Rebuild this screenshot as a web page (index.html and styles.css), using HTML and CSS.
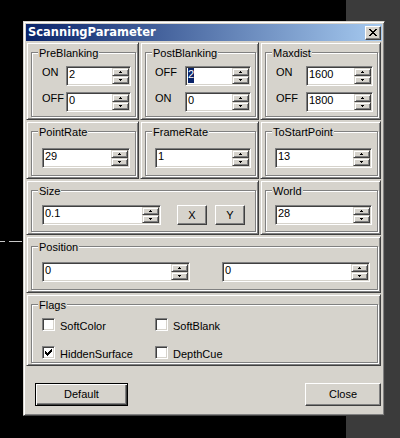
FILE: index.html
```html
<!DOCTYPE html>
<html>
<head>
<meta charset="utf-8">
<title>ScanningParameter</title>
<link rel="stylesheet" href="styles.css">
</head>
<body>
<div class="desktop">
  <div class="void">
    <div class="dashes"><span class="dash dash-a"></span><span class="dash dash-b"></span></div>
  </div>
  <div class="strip"></div>
</div>

<div class="window">
  <div class="titlebar">
    <span class="title">ScanningParameter</span>
    <span class="close-btn">
      <svg width="8" height="7" viewBox="0 0 8 7"><path d="M0 0h2v1H0z M6 0h2v1H6z M1 1h2v1H1z M5 1h2v1H5z M2 2h4v1H2z M3 3h2v1H3z M2 4h4v1H2z M1 5h2v1H1z M5 5h2v1H5z M0 6h2v1H0z M6 6h2v1H6z" fill="#000"/></svg>
    </span>
  </div>

  <div class="client">
    <div class="grid">
      <!-- Row 1 -->
      <div class="panel">
        <div class="group g-pair g-pre">
          <span class="gtitle">PreBlanking</span>
          <div class="frow"><span class="flabel">ON</span><div class="spin w65"><span class="val">2</span><span class="arrows"><i class="up"></i><i class="dn"></i></span></div></div>
          <div class="frow"><span class="flabel">OFF</span><div class="spin w65"><span class="val">0</span><span class="arrows"><i class="up"></i><i class="dn"></i></span></div></div>
        </div>
      </div>
      <div class="panel">
        <div class="group g-pair g-post">
          <span class="gtitle">PostBlanking</span>
          <div class="frow"><span class="flabel">OFF</span><div class="spin w66"><span class="val"><span class="sel">2</span></span><span class="arrows"><i class="up"></i><i class="dn"></i></span></div></div>
          <div class="frow"><span class="flabel">ON</span><div class="spin w66"><span class="val">0</span><span class="arrows"><i class="up"></i><i class="dn"></i></span></div></div>
        </div>
      </div>
      <div class="panel">
        <div class="group g-pair g-max">
          <span class="gtitle">Maxdist</span>
          <div class="frow"><span class="flabel">ON</span><div class="spin w67"><span class="val">1600</span><span class="arrows"><i class="up"></i><i class="dn"></i></span></div></div>
          <div class="frow"><span class="flabel">OFF</span><div class="spin w67"><span class="val">1800</span><span class="arrows"><i class="up"></i><i class="dn"></i></span></div></div>
        </div>
      </div>

      <!-- Row 2 -->
      <div class="panel">
        <div class="group g-single g-c1 r2">
          <span class="gtitle">PointRate</span>
          <div class="spin w88"><span class="val">29</span><span class="arrows"><i class="up"></i><i class="dn"></i></span></div>
        </div>
      </div>
      <div class="panel">
        <div class="group g-single g-c2 r2">
          <span class="gtitle">FrameRate</span>
          <div class="spin w96"><span class="val">1</span><span class="arrows"><i class="up"></i><i class="dn"></i></span></div>
        </div>
      </div>
      <div class="panel">
        <div class="group g-single g-c3 r2">
          <span class="gtitle">ToStartPoint</span>
          <div class="spin w97"><span class="val">13</span><span class="arrows"><i class="up"></i><i class="dn"></i></span></div>
        </div>
      </div>

      <!-- Row 3 -->
      <div class="panel span2">
        <div class="group g-single g-c1 r3">
          <span class="gtitle">Size</span>
          <div class="size-row">
            <div class="spin w119"><span class="val">0.1</span><span class="arrows"><i class="up"></i><i class="dn"></i></span></div>
            <span class="btn btn-xy btn-x">X</span>
            <span class="btn btn-xy">Y</span>
          </div>
        </div>
      </div>
      <div class="panel">
        <div class="group g-single g-c3 r3">
          <span class="gtitle">World</span>
          <div class="spin w97"><span class="val">28</span><span class="arrows"><i class="up"></i><i class="dn"></i></span></div>
        </div>
      </div>

      <!-- Row 4 -->
      <div class="panel span3">
        <div class="group g-single g-c1 r4">
          <span class="gtitle">Position</span>
          <div class="pos-row">
            <div class="spin w148"><span class="val">0</span><span class="arrows"><i class="up"></i><i class="dn"></i></span></div>
            <div class="spin w148"><span class="val">0</span><span class="arrows"><i class="up"></i><i class="dn"></i></span></div>
          </div>
        </div>
      </div>

      <!-- Row 5 -->
      <div class="panel span3">
        <div class="group g-flags">
          <span class="gtitle">Flags</span>
          <div class="flags">
            <label class="check"><span class="box"></span><span class="ctext">SoftColor</span></label>
            <label class="check"><span class="box"></span><span class="ctext">SoftBlank</span></label>
            <label class="check"><span class="box"><svg width="7" height="7" viewBox="0 0 7 7"><path d="M6 0h1v1H6z M5 1h2v1H5z M0 2h1v1H0z M4 2h3v1H4z M0 3h2v1H0z M3 3h3v1H3z M0 4h5v1H0z M1 5h3v1H1z M2 6h1v1H2z" fill="#000"/></svg></span><span class="ctext">HiddenSurface</span></label>
            <label class="check"><span class="box"></span><span class="ctext">DepthCue</span></label>
          </div>
        </div>
      </div>
    </div>

    <div class="actions">
      <span class="btn btn-default">Default</span>
      <span class="btn btn-close">Close</span>
    </div>
  </div>
</div>
</body>
</html>
```

FILE: styles.css
```css
* { box-sizing: border-box; }

body {
  margin: 0;
  width: 400px;
  height: 438px;
  overflow: hidden;
  position: relative;
  background: #000;
  font: 11px/13px "Liberation Sans", Arial, sans-serif;
  color: #000;
}

/* desktop */
.desktop { display: flex; height: 438px; }
.void { flex: 1; background: #000; }
.strip { width: 54px; background: #3b3b3b; }
.dashes { display: flex; gap: 4px; margin-top: 241px; }
.dash { height: 1px; background: #c8c8c8; }
.dash-a { width: 5px; }
.dash-b { width: 13px; }

/* window */
.window {
  position: absolute;
  left: 23px;
  top: 21px;
  width: 362px;
  height: 395px;
  background: #d6d3cc;
  border: 1px solid;
  border-color: #d6d3cc #404040 #404040 #d6d3cc;
  box-shadow: inset 1px 1px #fff, inset -1px -1px #808080;
  padding: 2px;
  display: flex;
  flex-direction: column;
}

.titlebar {
  height: 17px;
  background: linear-gradient(to right, #0a246a, #a6caf0);
  display: flex;
  align-items: center;
  justify-content: space-between;
  padding: 0 1px 0 2px;
}
.title {
  font: bold 11.5px/17px "DejaVu Sans", Verdana, sans-serif;
  color: #fff;
  white-space: nowrap;
}
.close-btn {
  width: 16px;
  height: 14px;
  background: #d6d3cc;
  border: 1px solid;
  border-color: #fff #404040 #404040 #fff;
  box-shadow: inset -1px -1px #808080;
  display: flex;
  align-items: center;
  justify-content: center;
  padding-right: 1px;
}
.close-btn svg { display: block; }

.client { flex: 1; display: flex; flex-direction: column; }

.grid {
  display: grid;
  grid-template-columns: 113px 119px 121px;
  grid-template-rows: 78px 58px 55px 57px 72px;
  gap: 1px;
  margin-top: 1px;
}

.panel {
  border: 1px solid;
  border-color: #d6d3cc #404040 #404040 #d6d3cc;
  box-shadow: inset 1px 1px #fff, inset -1px -1px #808080;
  padding: 9px 2px 2px 4px;
  display: flex;
}
.span2 { grid-column: span 2; }
.span3 { grid-column: span 3; }

.group {
  flex: 1;
  position: relative;
  border: 1px solid #808080;
  box-shadow: inset 1px 1px #fff, 1px 1px #fff;
}
.gtitle {
  position: absolute;
  top: -6px;
  left: 6px;
  padding: 0 1px;
  background: #d6d3cc;
  white-space: nowrap;
}

/* paired rows (ON / OFF) */
.g-pair {
  display: flex;
  flex-direction: column;
  gap: 6px;
  padding-top: 13px;
}
.g-pre { padding-left: 10px; }
.g-post { padding-left: 9px; }
.g-max { padding-left: 10px; }
.frow { display: flex; align-items: flex-start; }
.flabel { width: 30px; }
.g-pre .flabel { width: 24px; }

/* single rows */
.g-c1 { padding-left: 10px; }
.g-c2 { padding-left: 9px; }
.g-c3 { padding-left: 9px; }
.r2 { padding-top: 16px; }
.r3 { padding-top: 14px; }
.r4 { padding-top: 15px; }

.size-row { display: flex; align-items: flex-start; }
.btn-x { margin-left: 16px; margin-right: 8px; }
.pos-row { display: flex; gap: 32px; }

/* spin edit */
.spin {
  display: flex;
  height: 20px;
  background: #fff;
  border: 1px solid;
  border-color: #808080 #fff #fff #808080;
  box-shadow: inset 1px 1px #404040, inset -1px -1px #d6d3cc;
  padding: 1px;
}
.w65 { width: 65px; }
.w66 { width: 66px; }
.w67 { width: 67px; }
.w88 { width: 88px; }
.w96 { width: 96px; }
.w97 { width: 97px; }
.w119 { width: 119px; }
.w148 { width: 148px; }

.val {
  flex: 1;
  padding-left: 1px;
  line-height: 13px;
  white-space: nowrap;
  overflow: hidden;
}
.sel {
  display: inline-block;
  height: 15px;
  background: #0a246a;
  color: #fff;
}
.arrows {
  width: 17px;
  display: flex;
  flex-direction: column;
}
.arrows i {
  flex: 1;
  background: #d6d3cc;
  border: 1px solid;
  border-color: #d6d3cc #404040 #404040 #d6d3cc;
  box-shadow: inset 1px 1px #fff, inset -1px -1px #808080;
  display: flex;
  align-items: center;
  justify-content: center;
}
.arrows i::after {
  content: "";
  width: 1px;
  height: 1px;
  background: #000;
}
.arrows .up::after {
  margin-top: -1px;
  box-shadow: -1px 1px #000, 0 1px #000, 1px 1px #000;
}
.arrows .dn::after {
  margin-top: 1px;
  box-shadow: -1px -1px #000, 0 -1px #000, 1px -1px #000;
}

/* buttons */
.btn {
  display: flex;
  align-items: center;
  justify-content: center;
  background: #d6d3cc;
  border: 1px solid;
  border-color: #fff #404040 #404040 #fff;
  box-shadow: inset -1px -1px #808080;
}
.btn-xy { width: 30px; height: 20px; }

.actions {
  display: flex;
  justify-content: space-between;
  padding: 17px 1px 0 9px;
}
.btn-default {
  width: 93px;
  height: 23px;
  border-color: #000;
  box-shadow: inset 1px 1px #fff, inset -1px -1px #404040, inset -2px -2px #808080;
}
.btn-close { width: 76px; height: 23px; }

/* flags */
.g-flags { padding: 13px 0 0 10px; }
.flags {
  display: grid;
  grid-template-columns: 113px auto;
  row-gap: 13px;
}
.check { display: flex; align-items: flex-start; }
.box {
  width: 13px;
  height: 13px;
  background: #fff;
  border: 1px solid;
  border-color: #808080 #fff #fff #808080;
  box-shadow: inset 1px 1px #404040, inset -1px -1px #d6d3cc;
  padding: 2px;
}
.box svg { display: block; }
.ctext { margin-left: 5px; margin-top: 2px; }
```
